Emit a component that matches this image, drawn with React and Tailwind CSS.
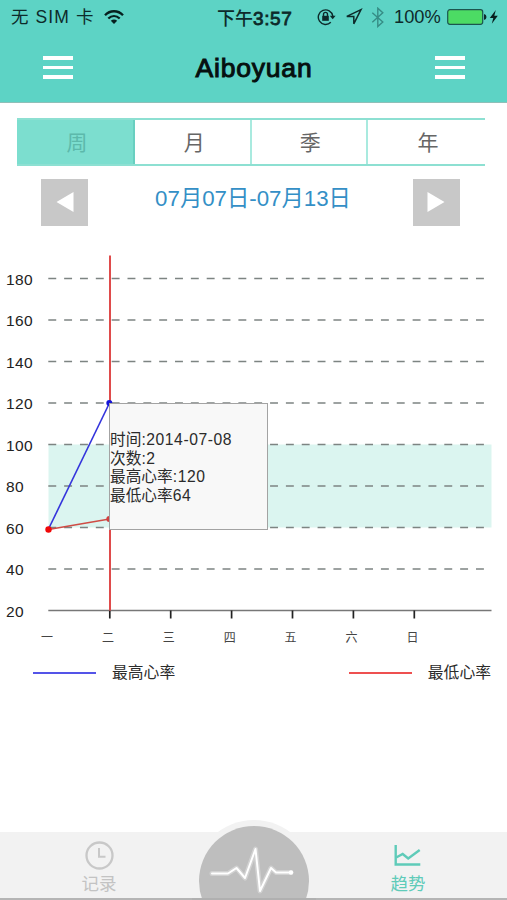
import React from "react";

const GRID = [180, 160, 140, 120, 100, 80, 60, 40];
const DAYS = ["一", "二", "三", "四", "五", "六", "日"];
const FONT = "'Liberation Sans', 'Noto Sans CJK SC', sans-serif";
const yOf = (v) => 610.5 - ((v - 20) / 20) * 41.5 - 240;
const xOf = (i) => 48.5 + i * 60.9;

function Menu() {
  return (
    <button className="flex w-[30px] flex-col gap-[6px]" aria-label="menu">
      <span className="h-[3.5px] w-full bg-white" />
      <span className="h-[3.5px] w-full bg-white" />
      <span className="h-[3.5px] w-full bg-white" />
    </button>
  );
}

function StatusBar() {
  return (
    <div className="flex h-[34px] items-center pl-[11px] text-[18px] leading-none text-[#0d2a2a]">
      <span className="w-[93px] whitespace-nowrap pt-[2px] text-[17.5px] tracking-[1.1px]">无 SIM 卡</span>
      <svg width="20" height="16" viewBox="0 0 20 16" className="-mt-px" fill="none" stroke="#06201f" strokeWidth="2.3">
        <path d="M1 6.2 C6 0.9 14 0.9 19 6.2" />
        <path d="M4.3 9.5 C7.7 6.2 12.3 6.2 15.7 9.5" />
        <path d="M6.8 11.7 Q10 9.3 13.2 11.7 L10 15 Z" fill="#06201f" stroke="none" />
      </svg>
      <span className="ml-[93px] w-[100px] whitespace-nowrap pt-[2px] text-[18px] font-medium">
        下午<span className="text-[19px] tracking-[0.6px] [-webkit-text-stroke:0.8px_#0d2a2a]">3:57</span>
      </span>
      <svg width="19" height="18" viewBox="0 0 19 18" fill="none" stroke="#0d2a2a" strokeWidth="1.4">
        <path d="M13.8 14.3 A7.3 7.3 0 1 1 15.8 8" />
        <path d="M12.8 7.8 H18.6 L15.7 11.3 Z" fill="#0d2a2a" stroke="none" />
        <rect x="5.2" y="7.8" width="6.6" height="5" fill="#0d2a2a" stroke="none" />
        <path d="M6.5 8 V6.4 A2 2 0 0 1 10.5 6.4 V8" />
      </svg>
      <svg width="18" height="18" viewBox="0 0 18 18" className="ml-[9px]" fill="none" stroke="#0d2a2a" strokeWidth="1.5" strokeLinejoin="miter">
        <path d="M16 1.6 L1.8 8.4 H8.8 V15.8 Z" />
      </svg>
      <svg width="14" height="21" viewBox="0 0 14 21" className="ml-[8px]" fill="none" stroke="#368c85" strokeWidth="1.4">
        <path d="M1.3 5.7 L11.8 15 L6.8 19.5 V1.2 L11.8 5.8 L1.3 15.2" />
      </svg>
      <span className="ml-[9px] w-[53px] pt-px text-[18.3px]">100%</span>
      <svg width="52" height="18" viewBox="0 0 52 18">
        <rect x="0.7" y="1.7" width="35" height="14.6" rx="2.2" fill="#4cdb64" stroke="#1c554e" strokeWidth="1.2" />
        <path d="M37 6 Q39.5 6.5 39.5 9 Q39.5 11.5 37 12 Z" fill="#0d2a2a" />
        <path d="M48.8 2 L42.8 10 H46.3 L44.8 15.8 L50.8 7.8 H47.3 Z" fill="#06201f" />
      </svg>
    </div>
  );
}

function Chart() {
  return (
    <div className="relative h-[410px] w-full">
      <svg width="507" height="410" viewBox="0 0 507 410" fontFamily={FONT}>
        <rect x="48.5" y={yOf(100)} width="443" height="83" fill="#dbf5f0" />
        {GRID.map((v) => (
          <line key={v} x1="48.3" x2="491" y1={yOf(v)} y2={yOf(v)} stroke="#7d8482" strokeWidth="1.5" strokeDasharray="7.92 7.92" />
        ))}
        <line x1="48.3" x2="491.5" y1={yOf(20)} y2={yOf(20)} stroke="#777" strokeWidth="1.4" />
        {[...GRID, 20].map((v) => (
          <text key={v} x="6" y={yOf(v) + 6} fontSize="15.5" letterSpacing="0.4" fill="#222">{v}</text>
        ))}
        {DAYS.map((d, i) => (
          <g key={d}>
            {i > 0 && <line x1={xOf(i) + 0.4} x2={xOf(i) + 0.4} y1="370.5" y2="378.5" stroke="#222" strokeWidth="1.7" />}
            <text x={xOf(i) - 1.5} y="401.5" fontSize="12" textAnchor="middle" fill="#444">{d}</text>
          </g>
        ))}
        <line x1="110" x2="110" y1="15.5" y2="370.5" stroke="#df4b4b" strokeWidth="2" />
        <line x1="48.5" y1="289" x2="109.5" y2={yOf(120)} stroke="#3434dc" strokeWidth="1.6" />
        <line x1="48.5" y1="289.5" x2="109.5" y2="279" stroke="#cf4c45" strokeWidth="1.6" />
        <circle cx="48.5" cy="289.5" r="3.2" fill="#f00808" />
        <circle cx="109.3" cy="279" r="3" fill="#cf4040" />
        <circle cx="109.3" cy="163" r="3" fill="#1414d8" />
      </svg>
      <div className="absolute left-[109px] top-[163px] flex h-[127px] w-[159px] flex-col border border-[#a3a3a3] bg-[#f8f8f8] pt-[27px] text-[15.7px] leading-[18.7px] whitespace-nowrap text-[#2b2b2b]">
        <span>时间<span className="tracking-[0.55px]">:2014-07-08</span></span>
        <span>次数<span className="tracking-[0.55px]">:2</span></span>
        <span>最高心率<span className="tracking-[0.55px]">:120</span></span>
        <span>最低心率<span className="tracking-[0.55px]">64</span></span>
      </div>
    </div>
  );
}

export default function App() {
  return (
    <div className="flex h-[900px] w-[507px] flex-col overflow-hidden bg-white font-['Liberation_Sans','Noto_Sans_CJK_SC',sans-serif]">
      <header className="h-[103px] shrink-0 border-b border-[#8fbfb8] bg-[#5dd3c5]">
        <StatusBar />
        <div className="flex h-[67px] items-center justify-between pl-[43px] pr-[42px]">
          <Menu />
          <h1 className="pt-[2px] text-[26.5px] font-normal tracking-[0.8px] text-[#06100f] [-webkit-text-stroke:1px_#06100f]">Aiboyuan</h1>
          <Menu />
        </div>
      </header>

      <nav className="ml-[17px] mt-[15px] grid h-[48px] w-[468px] shrink-0 grid-cols-[118px_116.5px_116.5px_117px] border-y-2 border-[#8de0d2] text-[21px] text-[#666]">
        <button className="border-r-2 border-[#69cfc0] bg-[#7cdecf] pl-[4px] pt-[2px] text-[#5cb9ab]">周</button>
        <button className="border-r-2 border-[#a9eadf] pl-[4px] pt-[2px]">月</button>
        <button className="border-r-2 border-[#a9eadf] pl-[3px] pt-[2px]">季</button>
        <button className="pl-[3px] pt-[2px]">年</button>
      </nav>

      <div className="mt-[12px] flex h-[48px] shrink-0 items-center justify-between pl-[41px] pr-[47px]">
        <button className="flex h-[47px] w-[47px] items-center justify-center bg-[#c8c8c8]" aria-label="previous">
          <svg width="18" height="22" viewBox="0 0 18 22"><path d="M0.5 11 L17.5 1 V21 Z" fill="#fff" /></svg>
        </button>
        <span className="-mt-[6px] ml-[5px] whitespace-nowrap text-[22.3px] text-[#348fc6]">07月07日-07月13日</span>
        <button className="flex h-[47px] w-[47px] items-center justify-center bg-[#c8c8c8]" aria-label="next">
          <svg width="18" height="22" viewBox="0 0 18 22"><path d="M17.5 11 L0.5 1 V21 Z" fill="#fff" /></svg>
        </button>
      </div>

      <div className="mt-[14px] shrink-0">
        <Chart />
      </div>

      <div className="flex h-[46px] shrink-0 items-center justify-between pl-[33px] pr-[16px] text-[15.8px] text-[#2b2b2b]">
        <div className="flex items-center gap-[16px]">
          <span className="h-[2px] w-[63px] bg-[#5454e8]" />
          <span>最高心率</span>
        </div>
        <div className="flex items-center gap-[16px]">
          <span className="h-[2px] w-[63px] bg-[#ee5050]" />
          <span>最低心率</span>
        </div>
      </div>

      <footer className="relative mt-auto flex h-[68px] shrink-0 justify-between border-b-2 border-[#b5b5b5] bg-[#f2f2f2] pl-[70px] pr-[70px] text-[17.5px] leading-none">
        <div className="flex w-[58px] flex-col items-center pt-[9px] text-[#c3c3c3]">
          <svg width="30" height="30" viewBox="0 0 30 30" fill="none" stroke="#c8c8c8" strokeWidth="2.3">
            <circle cx="15.5" cy="14.5" r="13" />
            <path d="M15 7 V15.7 H21.5" strokeWidth="2" />
          </svg>
          <span className="mt-[5px]">记录</span>
        </div>
        <svg width="124" height="80" viewBox="0 0 124 80" className="absolute bottom-[-2px] left-[192px]">
          <circle cx="62" cy="61" r="61" fill="#f2f2f2" />
          <circle cx="62" cy="61" r="55" fill="#bebebe" />
          <path d="M0 79 H124" stroke="#b0b0b0" strokeWidth="2" />
          <g fill="none" stroke="#fff" strokeLinejoin="round" strokeLinecap="round">
            <path d="M20 53.5 H36 L44.5 48 L53 58 L63.5 29 L68 71 L79 48 L84 52.5 H99" strokeWidth="5" opacity="0.3" />
            <path d="M20 53.5 H36 L44.5 48 L53 58 L63.5 29 L68 71 L79 48 L84 52.5 H99" strokeWidth="2" />
          </g>
          <circle cx="99" cy="52.5" r="2.2" fill="#fff" />
        </svg>
        <div className="flex w-[58px] flex-col items-center pt-[9px] text-[#5fcbb9]">
          <svg width="30" height="30" viewBox="0 0 30 30" fill="none" stroke="#5fcbb9" strokeWidth="2.4">
            <path d="M2.7 4 V23.5 H27.3" />
            <path d="M3.2 16.5 L9.7 13 L15.2 17.5 L26.7 9" />
          </svg>
          <span className="mt-[5px]">趋势</span>
        </div>
      </footer>
    </div>
  );
}
